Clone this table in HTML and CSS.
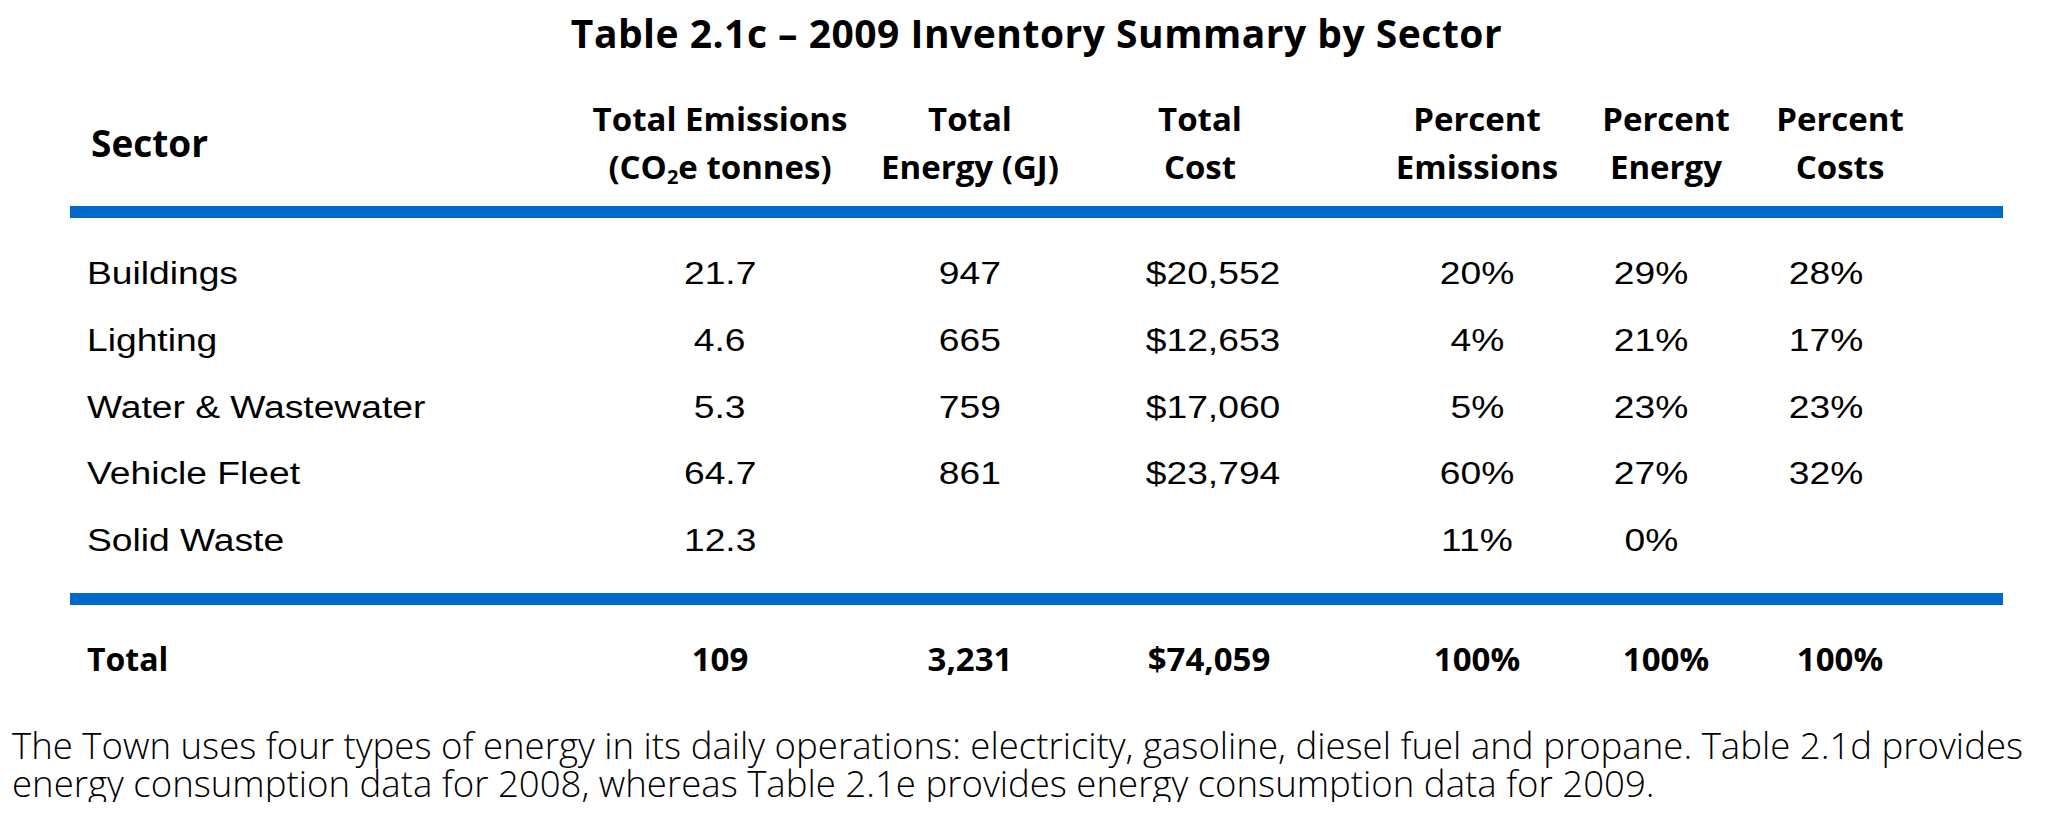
FILE: index.html
```html
<!DOCTYPE html>
<html lang="en">
<head>
<meta charset="utf-8">
<title>Table 2.1c – 2009 Inventory Summary by Sector</title>
<link rel="stylesheet" href="styles.css">
</head>
<body>
<div class="page">
  <h1 class="title">Table 2.1c – 2009 Inventory Summary by Sector</h1>
  <div class="table">
    <div class="grid head">
      <div class="c0 sector">Sector</div>
      <div class="c1">Total Emissions<br>(CO<sub>2</sub>e tonnes)</div>
      <div class="c2">Total<br>Energy (GJ)</div>
      <div class="c3">Total<br>Cost</div>
      <div class="c4">Percent<br>Emissions</div>
      <div class="c5">Percent<br>Energy</div>
      <div class="c6">Percent<br>Costs</div>
    </div>
    <div class="bar"></div>
    <div class="rows">
      <div class="grid row">
        <div class="c0"><span class="sx">Buildings</span></div>
        <div class="c1"><span class="sx">21.7</span></div>
        <div class="c2"><span class="sx">947</span></div>
        <div class="c3"><span class="sx">$20,552</span></div>
        <div class="c4"><span class="sx">20%</span></div>
        <div class="c5"><span class="sx">29%</span></div>
        <div class="c6"><span class="sx">28%</span></div>
      </div>
      <div class="grid row">
        <div class="c0"><span class="sx">Lighting</span></div>
        <div class="c1"><span class="sx">4.6</span></div>
        <div class="c2"><span class="sx">665</span></div>
        <div class="c3"><span class="sx">$12,653</span></div>
        <div class="c4"><span class="sx">4%</span></div>
        <div class="c5"><span class="sx">21%</span></div>
        <div class="c6"><span class="sx">17%</span></div>
      </div>
      <div class="grid row">
        <div class="c0"><span class="sx">Water &amp; Wastewater</span></div>
        <div class="c1"><span class="sx">5.3</span></div>
        <div class="c2"><span class="sx">759</span></div>
        <div class="c3"><span class="sx">$17,060</span></div>
        <div class="c4"><span class="sx">5%</span></div>
        <div class="c5"><span class="sx">23%</span></div>
        <div class="c6"><span class="sx">23%</span></div>
      </div>
      <div class="grid row">
        <div class="c0"><span class="sx">Vehicle Fleet</span></div>
        <div class="c1"><span class="sx">64.7</span></div>
        <div class="c2"><span class="sx">861</span></div>
        <div class="c3"><span class="sx">$23,794</span></div>
        <div class="c4"><span class="sx">60%</span></div>
        <div class="c5"><span class="sx">27%</span></div>
        <div class="c6"><span class="sx">32%</span></div>
      </div>
      <div class="grid row">
        <div class="c0"><span class="sx">Solid Waste</span></div>
        <div class="c1"><span class="sx">12.3</span></div>
        <div class="c2"></div>
        <div class="c3"></div>
        <div class="c4"><span class="sx">11%</span></div>
        <div class="c5"><span class="sx">0%</span></div>
        <div class="c6"></div>
      </div>
    </div>
    <div class="bar bar-bottom"></div>
    <div class="grid total">
      <div class="c0">Total</div>
      <div class="c1">109</div>
      <div class="c2">3,231</div>
      <div class="c3">$74,059</div>
      <div class="c4">100%</div>
      <div class="c5">100%</div>
      <div class="c6">100%</div>
    </div>
  </div>
  <p class="note">The Town uses four types of energy in its daily operations: electricity, gasoline, diesel fuel and propane. Table 2.1d provides energy consumption data for 2008, whereas Table 2.1e provides energy consumption data for 2009.</p>
</div>
</body>
</html>
```

FILE: styles.css
```css
html, body {
  margin: 0;
  padding: 0;
  background: #ffffff;
  color: #000000;
}

.page {
  width: 2051px;
}

.title {
  margin: 0 0 0 70px;
  padding-top: 8px;
  width: 1933px;
  text-align: center;
  font-family: "Open Sans", "DejaVu Sans", sans-serif;
  font-weight: 700;
  font-size: 39px;
  line-height: 50px;
  letter-spacing: 0.5px;
}

.table {
  margin: 37px 0 0 70px;
  width: 1933px;
}

.grid {
  display: grid;
  grid-template-columns: 520px 260px 20px 200px 30px 200px 87px 180px 24px 150px 24px 150px;
}

.grid > div {
  text-align: center;
  white-space: nowrap;
}

.grid > .c0 { grid-column: 1; text-align: left; }
.grid > .c1 { grid-column: 2; }
.grid > .c2 { grid-column: 4; }
.grid > .c3 { grid-column: 6; }
.grid > .c4 { grid-column: 8; }
.grid > .c5 { grid-column: 10; }
.grid > .c6 { grid-column: 12; }

.head {
  font-family: "Open Sans", "DejaVu Sans", sans-serif;
  font-weight: 700;
  font-size: 33px;
  line-height: 48px;
}

.head .sector {
  align-self: center;
  padding-left: 21px;
  font-size: 37px;
}

.head sub {
  font-size: 20px;
  line-height: 0;
  vertical-align: -5px;
}

.bar {
  height: 12px;
  margin-top: 15px;
  background: #0068c9;
}

.rows {
  margin-top: 23px;
}

.row {
  font-family: "Liberation Sans", Arial, sans-serif;
  font-size: 31px;
  line-height: 66.75px;
}

.row .c0 {
  padding-left: 17px;
}

.sx {
  display: inline-block;
  transform: scaleX(1.2);
}

.row .c0 .sx {
  transform-origin: left center;
}

.row .c3 { padding-left: 26px; }
.row .c5 { padding-right: 30px; }
.row .c6 { padding-right: 28px; }

.bar-bottom {
  margin-top: 18px;
}

.total {
  margin-top: 34px;
  font-family: "Open Sans", "DejaVu Sans", sans-serif;
  font-weight: 700;
  font-size: 33px;
  line-height: 40px;
}

.total .c0 {
  padding-left: 17px;
  font-size: 32px;
}

.total .c3 { padding-left: 18px; }

.note {
  margin: 47px 0 0 12px;
  width: 2035px;
  font-family: "Open Sans", "DejaVu Sans", sans-serif;
  font-weight: 300;
  font-size: 36.6px;
  line-height: 38px;
}
```
